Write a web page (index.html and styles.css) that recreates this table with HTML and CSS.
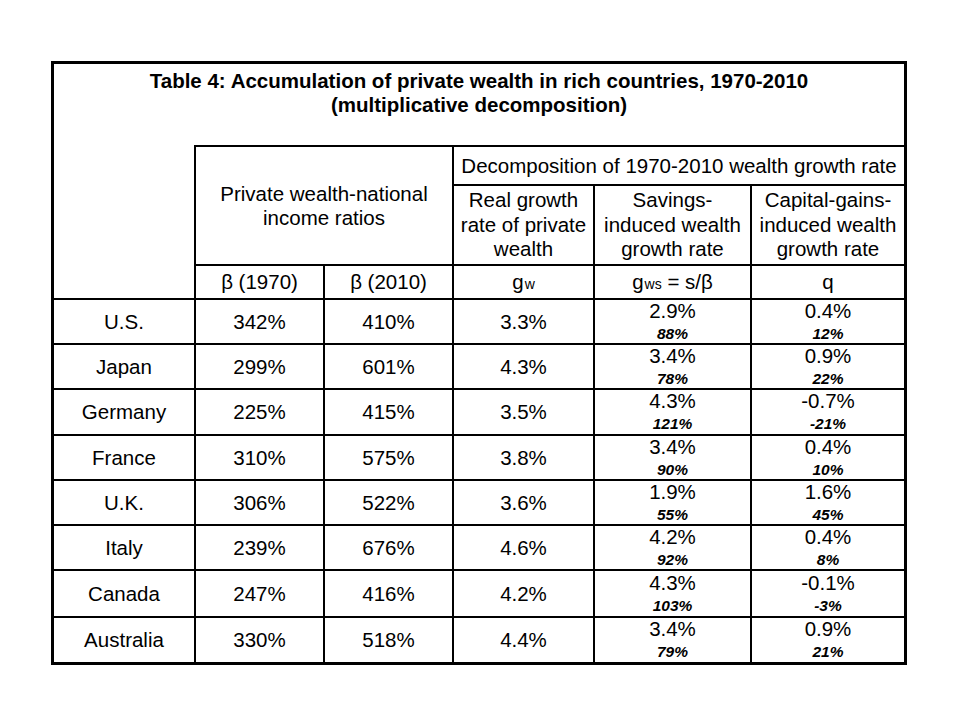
FILE: index.html
```html
<!DOCTYPE html>
<html lang="en">
<head>
<meta charset="utf-8">
<title>Table 4</title>
<link rel="stylesheet" href="styles.css">
</head>
<body>
<div class="table">
  <div class="cell title">Table 4: Accumulation of private wealth in rich countries, 1970-2010<br>(multiplicative decomposition)</div>
  <div class="cell blank"></div>
  <div class="cell pw">Private wealth-national<br>income ratios</div>
  <div class="cell decomp">Decomposition of 1970-2010 wealth growth rate</div>
  <div class="cell hd">Real growth<br>rate of private<br>wealth</div>
  <div class="cell hd">Savings-<br>induced wealth<br>growth rate</div>
  <div class="cell hd">Capital-gains-<br>induced wealth<br>growth rate</div>

  <div class="cell">β (1970)</div>
  <div class="cell">β (2010)</div>
  <div class="cell">g<span class="sub-s">w</span></div>
  <div class="cell">g<span class="sub-s">ws</span>&nbsp;= s/β</div>
  <div class="cell">q</div>

  <div class="cell">U.S.</div><div class="cell">342%</div><div class="cell">410%</div><div class="cell">3.3%</div>
  <div class="cell"><div class="two"><div class="main">2.9%</div><div class="share">88%</div></div></div>
  <div class="cell"><div class="two"><div class="main">0.4%</div><div class="share">12%</div></div></div>

  <div class="cell">Japan</div><div class="cell">299%</div><div class="cell">601%</div><div class="cell">4.3%</div>
  <div class="cell"><div class="two"><div class="main">3.4%</div><div class="share">78%</div></div></div>
  <div class="cell"><div class="two"><div class="main">0.9%</div><div class="share">22%</div></div></div>

  <div class="cell">Germany</div><div class="cell">225%</div><div class="cell">415%</div><div class="cell">3.5%</div>
  <div class="cell"><div class="two"><div class="main">4.3%</div><div class="share">121%</div></div></div>
  <div class="cell"><div class="two"><div class="main">-0.7%</div><div class="share">-21%</div></div></div>

  <div class="cell">France</div><div class="cell">310%</div><div class="cell">575%</div><div class="cell">3.8%</div>
  <div class="cell"><div class="two"><div class="main">3.4%</div><div class="share">90%</div></div></div>
  <div class="cell"><div class="two"><div class="main">0.4%</div><div class="share">10%</div></div></div>

  <div class="cell">U.K.</div><div class="cell">306%</div><div class="cell">522%</div><div class="cell">3.6%</div>
  <div class="cell"><div class="two"><div class="main">1.9%</div><div class="share">55%</div></div></div>
  <div class="cell"><div class="two"><div class="main">1.6%</div><div class="share">45%</div></div></div>

  <div class="cell">Italy</div><div class="cell">239%</div><div class="cell">676%</div><div class="cell">4.6%</div>
  <div class="cell"><div class="two"><div class="main">4.2%</div><div class="share">92%</div></div></div>
  <div class="cell"><div class="two"><div class="main">0.4%</div><div class="share">8%</div></div></div>

  <div class="cell">Canada</div><div class="cell">247%</div><div class="cell">416%</div><div class="cell">4.2%</div>
  <div class="cell"><div class="two"><div class="main">4.3%</div><div class="share">103%</div></div></div>
  <div class="cell"><div class="two"><div class="main">-0.1%</div><div class="share">-3%</div></div></div>

  <div class="cell">Australia</div><div class="cell">330%</div><div class="cell">518%</div><div class="cell">4.4%</div>
  <div class="cell"><div class="two"><div class="main">3.4%</div><div class="share">79%</div></div></div>
  <div class="cell"><div class="two"><div class="main">0.9%</div><div class="share">21%</div></div></div>
</div>
</body>
</html>
```
FILE: styles.css
```css
html, body {
  margin: 0;
  padding: 0;
  background: #fff;
}

body {
  font-family: "Liberation Sans", Arial, sans-serif;
  color: #000;
  font-size: 20.5px;
}

.table {
  box-sizing: border-box;
  width: 856px;
  margin: 61px 0 0 51px;
  border: 3px solid #000;
  background: #000;
  display: grid;
  grid-template-columns: 140px 127px 127px 139px 155px 152px;
  grid-template-rows: 81px 37px 78px 32px 43px 43px 44px 43px 43px 43px 45px 44px;
  gap: 2px;
}

.cell {
  background: #fff;
  display: flex;
  align-items: center;
  justify-content: center;
  text-align: center;
  line-height: 24px;
  white-space: nowrap;
}

.title {
  grid-column: 1 / -1;
  align-items: flex-start;
  padding-top: 5px;
  font-weight: bold;
  line-height: 23.5px;
}

.blank {
  grid-column: 1;
  grid-row: 2 / 5;
  margin-top: -2px;
}

.pw {
  grid-column: 2 / 4;
  grid-row: 2 / 4;
}

.decomp {
  grid-column: 4 / 7;
}

.hd {
  line-height: 24.4px;
}

.sub-s {
  font-size: 14px;
  position: relative;
  top: 2px;
  margin-left: 1px;
}

.two {
  display: flex;
  flex-direction: column;
  align-items: center;
}

.main {
  line-height: 18px;
}

.share {
  margin-top: 5px;
  font-size: 15.5px;
  line-height: 17px;
  font-weight: bold;
  font-style: italic;
}
```
